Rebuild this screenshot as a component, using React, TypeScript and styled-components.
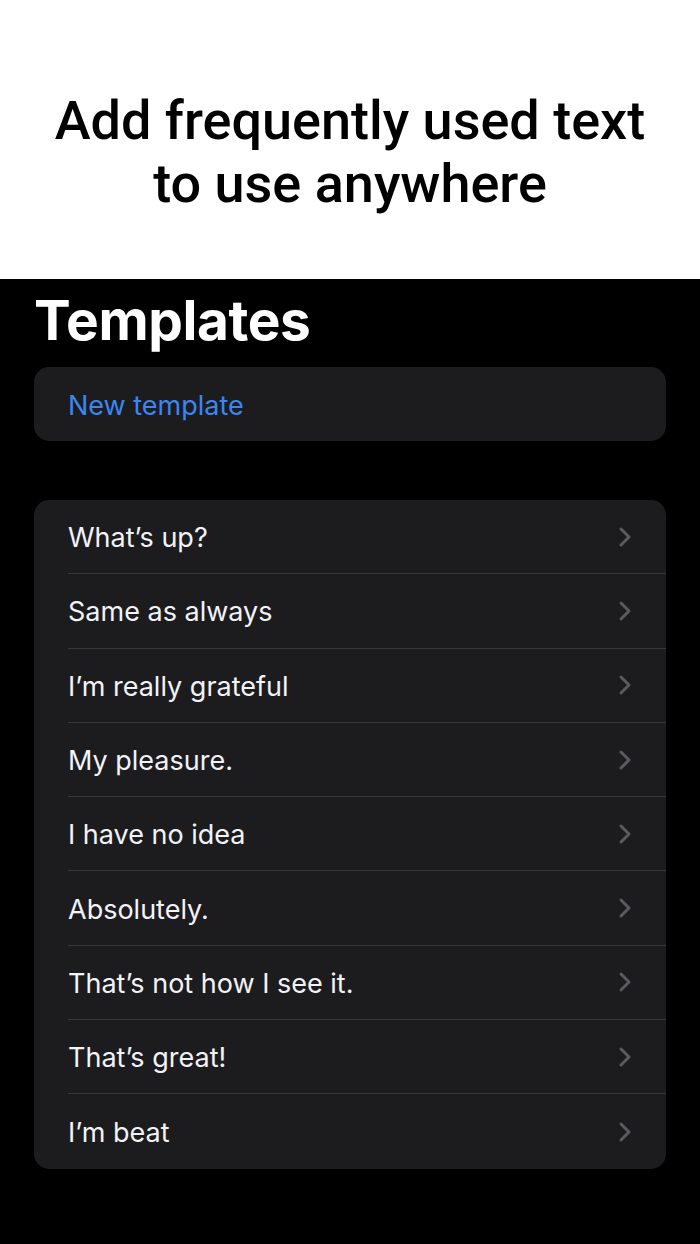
import React from "react";
import styled, { createGlobalStyle } from "styled-components";

const Global = createGlobalStyle`
  html, body { margin: 0; padding: 0; background: #000; }
  body { font-family: Inter, "Noto Sans", sans-serif; -webkit-font-smoothing: antialiased; }
`;

const Page = styled.div`
  width: 700px;
  height: 1244px;
  display: flex;
  flex-direction: column;
  background: #000;
  overflow: hidden;
`;

const Header = styled.header`
  height: 279px;
  background: #fff;
  display: flex;
  align-items: center;
  justify-content: center;
  flex-shrink: 0;
`;

const Headline = styled.h1`
  margin: 0;
  padding-top: 25px;
  font-family: Roboto, sans-serif;
  font-weight: 500;
  font-size: 54px;
  line-height: 63px;
  color: #000;
  text-align: center;
`;

const Content = styled.main`
  padding: 0 34px;
  display: flex;
  flex-direction: column;
`;

const Title = styled.h2`
  margin: 9px 0 0 0;
  font-family: Inter, sans-serif;
  font-weight: 700;
  font-size: 55px;
  line-height: 64px;
  color: #fff;
  letter-spacing: -0.4px;
`;

const Card = styled.div<{ $gap?: number }>`
  margin-top: ${(p) => p.$gap ?? 0}px;
  background: #1c1c1e;
  border-radius: 15px;
  overflow: hidden;
`;

const ActionRow = styled.div`
  height: 74px;
  display: flex;
  align-items: center;
  padding-left: 34px;
  padding-top: 2px;
  box-sizing: border-box;
  font-size: 27px;
  color: #3b86f2;
`;

const Row = styled.div`
  height: 74.3px;
  display: flex;
  align-items: center;
  margin-left: 34px;
  padding-right: 34px;
  box-sizing: border-box;
  border-bottom: 1px solid #38383a;
  &:last-child { border-bottom: none; }
`;

const RowText = styled.span`
  flex: 1;
  padding-top: 2px;
  font-size: 27px;
  color: #f2f2f7;
`;

const Chevron = () => (
  <svg width="14" height="22" viewBox="0 0 14 22" fill="none">
    <path d="M3 3l8 8-8 8" stroke="#5b5b5f" strokeWidth="3" strokeLinecap="round" strokeLinejoin="round" />
  </svg>
);

const items = [
  "What’s up?",
  "Same as always",
  "I’m really grateful",
  "My pleasure.",
  "I have no idea",
  "Absolutely.",
  "That’s not how I see it.",
  "That’s great!",
  "I’m beat",
];

export default function App() {
  return (
    <Page>
      <Global />
      <Header>
        <Headline>
          Add frequently used text
          <br />
          to use anywhere
        </Headline>
      </Header>
      <Content>
        <Title>Templates</Title>
        <Card $gap={15}>
          <ActionRow>New template</ActionRow>
        </Card>
        <Card $gap={59}>
          {items.map((t) => (
            <Row key={t}>
              <RowText>{t}</RowText>
              <Chevron />
            </Row>
          ))}
        </Card>
      </Content>
    </Page>
  );
}
